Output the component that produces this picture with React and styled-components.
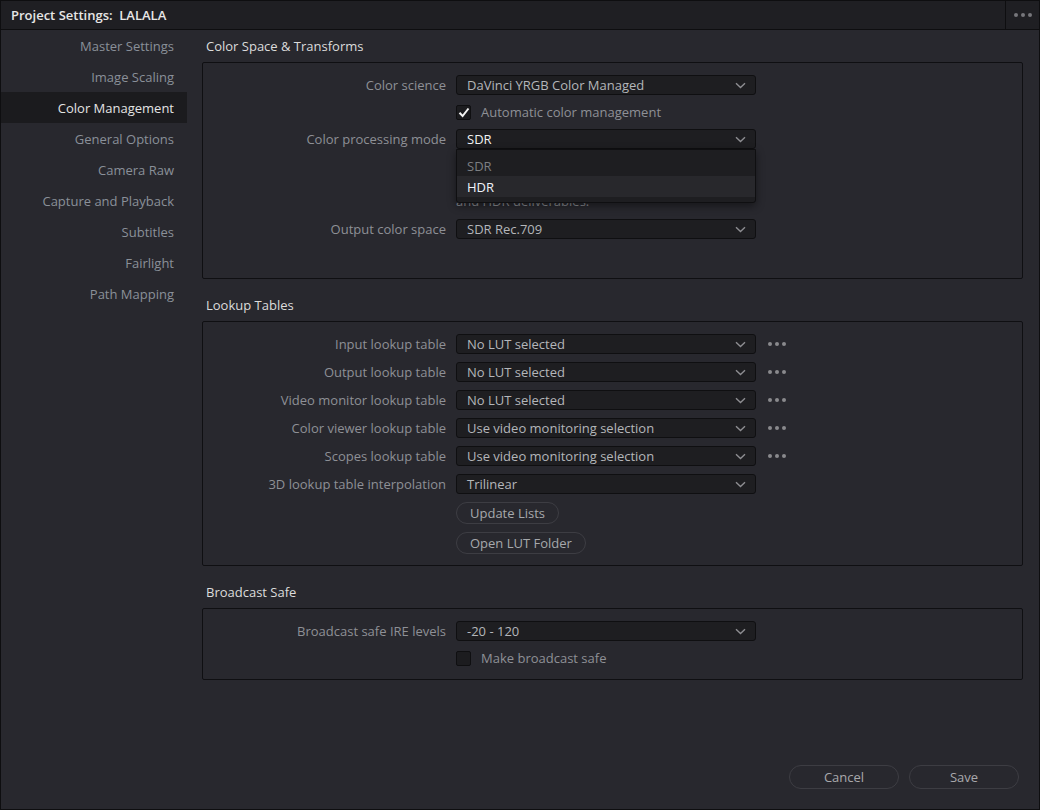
import React from "react";
import styled, { createGlobalStyle } from "styled-components";

const GlobalStyle = createGlobalStyle`
  html, body { margin: 0; padding: 0; background: #28282e; }
  body { font-family: "Open Sans", "Noto Sans", sans-serif; font-size: 13px; }
  * { box-sizing: border-box; }
`;

const Window = styled.div`
  width: 1040px;
  height: 810px;
  display: flex;
  flex-direction: column;
  background: #28282e;
  border: 1px solid #0e0e10;
`;

const TitleBar = styled.div`
  height: 29px;
  flex: none;
  display: flex;
  align-items: center;
  background: #1f1f23;
  border-bottom: 1px solid #0e0e10;
`;

const Title = styled.div`
  flex: 1;
  padding-left: 10px;
  font-weight: 600;
  color: #e6e6e6;
  white-space: pre;
`;

const TitleMenu = styled.div`
  width: 34px;
  height: 100%;
  display: flex;
  align-items: center;
  justify-content: center;
  border-left: 1px solid #0e0e10;
`;

const Body = styled.div`
  flex: 1;
  display: flex;
  min-height: 0;
`;

const Sidebar = styled.nav`
  width: 186px;
  flex: none;
  display: flex;
  flex-direction: column;
`;

const NavItem = styled.div`
  height: 31px;
  display: flex;
  align-items: center;
  justify-content: flex-end;
  padding-right: 13px;
  color: ${(p) => (p.$active ? "#e4e4e4" : "#8a9099")};
  background: ${(p) => (p.$active ? "#1b1b1e" : "transparent")};
`;

const Main = styled.div`
  flex: 1;
  display: flex;
  flex-direction: column;
  padding: 6px 16px 20px 15px;
`;

const SectionTitle = styled.div`
  height: 20px;
  line-height: 20px;
  color: #dcdcdc;
  padding-left: 4px;
  margin-bottom: 6px;
  margin-top: ${(p) => p.$top ?? 16}px;
`;

const Panel = styled.div`
  border: 1px solid #0f0f12;
  border-radius: 2px;
  display: grid;
  grid-template-columns: 243px 300px 1fr;
  column-gap: 10px;
  row-gap: ${(p) => p.$gap || 8}px;
  align-items: center;
  padding: 12px 0 ${(p) => p.$bottom || 12}px 0;
`;

const Label = styled.div`
  text-align: right;
  color: #8e9096;
  line-height: 20px;
`;

const Cell = styled.div`
  grid-column: 2 / span 2;
  display: flex;
  align-items: center;
`;

const ControlWrap = styled.div`
  position: relative;
  height: 20px;
`;

const Select = styled.div`
  height: 20px;
  width: 300px;
  display: flex;
  align-items: center;
  justify-content: space-between;
  padding: 0 9px 0 10px;
  background: #1e1e21;
  border: 1px solid #0f0f11;
  border-radius: 3px;
  color: ${(p) => (p.$bright ? "#f2f2f2" : "#b4b6ba")};
`;

const Popup = styled.div`
  position: absolute;
  top: 20px;
  left: 0;
  width: 300px;
  padding: 5px 0 5px;
  background: #1e1e21;
  border: 1px solid #0f0f11;
  border-radius: 0 0 3px 3px;
  box-shadow: 0 3px 8px rgba(0, 0, 0, 0.45);
  z-index: 2;
`;

const PopupItem = styled.div`
  height: 21px;
  display: flex;
  align-items: center;
  padding-left: 10px;
  color: ${(p) => (p.$hover ? "#eef2fa" : "#7c7e82")};
  background: ${(p) => (p.$hover ? "#28282c" : "transparent")};
`;

const More = styled.div`
  margin-left: ${(p) => p.$offset ?? 12}px;
  display: flex;
  gap: 3px;
`;

const Dot = styled.span`
  width: 4px;
  height: 4px;
  border-radius: 50%;
  background: ${(p) => p.$color || "#8a8a8d"};
`;

const CheckRow = styled.label`
  display: flex;
  align-items: center;
  gap: 10px;
  height: 20px;
  color: #8e9096;
`;

const Box = styled.span`
  width: 15px;
  height: 15px;
  border-radius: 2px;
  background: #1c1c1f;
  border: 1px solid #0f0f11;
  display: flex;
  align-items: center;
  justify-content: center;
`;

const Note = styled.div`
  grid-column: 2 / span 2;
  color: #8a8c92;
  line-height: 18px;
  margin: 0 0 2px;
`;

const Pill = styled.button`
  height: 22px;
  padding: 0 13px;
  border: 1px solid #3d3d43;
  border-radius: 11px;
  background: transparent;
  color: #a6a8ac;
  font: inherit;
  line-height: 1;
`;

const Footer = styled.div`
  margin-top: auto;
  display: flex;
  justify-content: flex-end;
  gap: 10px;
  padding-right: 4px;
`;

const FooterButton = styled(Pill)`
  width: 110px;
  height: 24px;
  border-radius: 12px;
  color: #a8a8ac;
`;

const Chevron = () => (
  <svg width="11" height="7" viewBox="0 0 11 7">
    <path d="M1 1.2 L5.5 5.5 L10 1.2" fill="none" stroke="#8e8e92" strokeWidth="1.4" />
  </svg>
);

const Tick = () => (
  <svg width="12" height="11" viewBox="0 0 12 11">
    <path d="M1.5 5.8 L4.6 9 L10.5 1.5" fill="none" stroke="#f4f4f4" strokeWidth="2" />
  </svg>
);

const Dots = ({ offset, color }) => (
  <More $offset={offset}>
    <Dot $color={color} />
    <Dot $color={color} />
    <Dot $color={color} />
  </More>
);

const Dropdown = ({ value, bright }) => (
  <Select $bright={bright}>
    <span>{value}</span>
    <Chevron />
  </Select>
);

const Row = ({ label, value, more }) => (
  <>
    <Label>{label}</Label>
    <Cell>
      <Dropdown value={value} />
      {more && <Dots />}
    </Cell>
  </>
);

const Check = ({ checked, children }) => (
  <Cell>
    <CheckRow>
      <Box>{checked && <Tick />}</Box>
      {children}
    </CheckRow>
  </Cell>
);

const nav = [
  "Master Settings",
  "Image Scaling",
  "Color Management",
  "General Options",
  "Camera Raw",
  "Capture and Playback",
  "Subtitles",
  "Fairlight",
  "Path Mapping",
];

export default function App() {
  return (
    <>
      <GlobalStyle />
      <Window>
        <TitleBar>
          <Title>{"Project Settings:  LALALA"}</Title>
          <TitleMenu>
            <Dots offset={0} color="#77777b" />
          </TitleMenu>
        </TitleBar>
        <Body>
          <Sidebar>
            {nav.map((n) => (
              <NavItem key={n} $active={n === "Color Management"}>
                {n}
              </NavItem>
            ))}
          </Sidebar>
          <Main>
            <SectionTitle $top={0}>Color Space &amp; Transforms</SectionTitle>
            <Panel $gap={7} $bottom={39}>
              <Row label="Color science" value="DaVinci YRGB Color Managed" />
              <Check checked>Automatic color management</Check>
              <Label>Color processing mode</Label>
              <Cell>
                <ControlWrap>
                  <Dropdown value="SDR" bright />
                  <Popup>
                    <PopupItem>SDR</PopupItem>
                    <PopupItem $hover>HDR</PopupItem>
                  </Popup>
                </ControlWrap>
              </Cell>
              <Note>
                SDR mode is recommended for SDR deliverables.
                <br />
                HDR mode is recommended for both SDR
                <br />
                and HDR deliverables.
              </Note>
              <Row label="Output color space" value="SDR Rec.709" />
            </Panel>

            <SectionTitle>Lookup Tables</SectionTitle>
            <Panel $bottom={11}>
              <Row label="Input lookup table" value="No LUT selected" more />
              <Row label="Output lookup table" value="No LUT selected" more />
              <Row label="Video monitor lookup table" value="No LUT selected" more />
              <Row label="Color viewer lookup table" value="Use video monitoring selection" more />
              <Row label="Scopes lookup table" value="Use video monitoring selection" more />
              <Row label="3D lookup table interpolation" value="Trilinear" />
              <Cell>
                <Pill>Update Lists</Pill>
              </Cell>
              <Cell>
                <Pill>Open LUT Folder</Pill>
              </Cell>
            </Panel>

            <SectionTitle>Broadcast Safe</SectionTitle>
            <Panel $gap={7} $bottom={11}>
              <Row label="Broadcast safe IRE levels" value="-20 - 120" />
              <Check>Make broadcast safe</Check>
            </Panel>

            <Footer>
              <FooterButton>Cancel</FooterButton>
              <FooterButton>Save</FooterButton>
            </Footer>
          </Main>
        </Body>
      </Window>
    </>
  );
}
